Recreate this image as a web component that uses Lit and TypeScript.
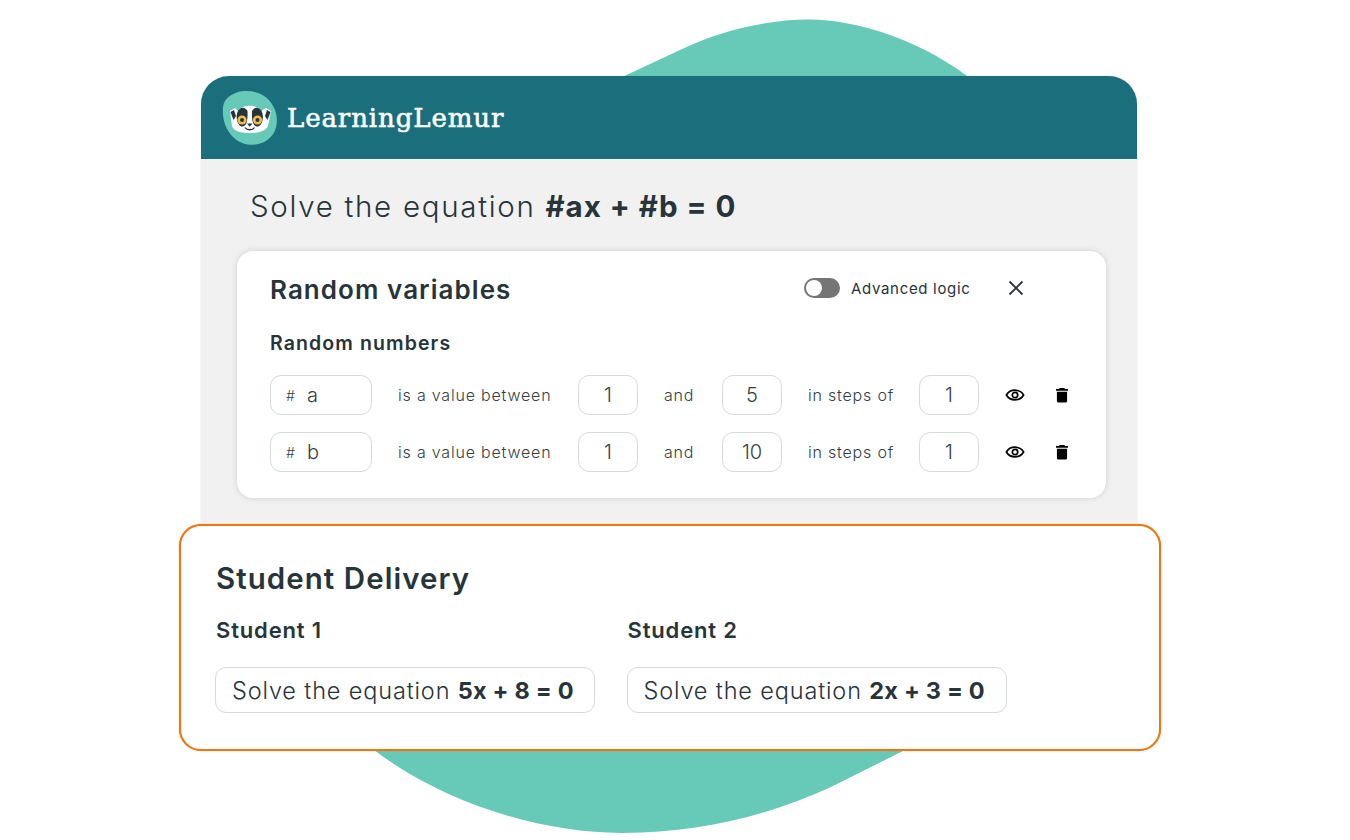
import { LitElement, html, css } from "lit";
import { customElement } from "lit/decorators.js";

const eye = html`<svg class="ic" width="20" height="20" viewBox="0 0 20 20" fill="none" stroke="#000" stroke-width="1.7"><path d="M1.4 10C3.2 6.9 6.3 5.2 10 5.2S16.8 6.9 18.6 10C16.8 13.1 13.7 14.8 10 14.8S3.2 13.1 1.4 10Z"/><circle cx="10" cy="10" r="2.7"/></svg>`;
const trash = html`<svg class="ic" width="20" height="20" viewBox="0 0 20 20" fill="#000"><path d="M7.7 3.1h4.6l.8.9h2.900v1.700H4V4h2.900zM4.900 6.700h10.200v9.200a1.700 1.700 0 0 1-1.700 1.700H6.600a1.700 1.700 0 0 1-1.700-1.700z"/></svg>`;
const logo = html`<svg width="56" height="56" viewBox="0 0 56 56">
  <path d="M22 1C35 0 48 6 53 20C57 31 55 44 44 51C33 57 20 56 11 47C3 39 0 28 1 17C2 8 11 2 22 1Z" fill="#67C9B8"/>
  <g transform="translate(-1 0)">
    <path d="M9 21L14 18L17 21C22 14 36 14 40 21L45 18L50 21L47 36C44 42 36 43 29 43C21 43 13 42 11 36Z" fill="#fff"/>
    <path d="M9.500 22L13 20L15 26L12.500 30ZM49.500 22L46 20L44 26L46.500 30Z" fill="#27343a"/>
    <path d="M26.500 21C23 15.500 18.500 17.500 16.500 22C14.500 27 16 35 20.500 36.500C25 37 27 32 26.500 21Z" fill="#27343a"/>
    <path d="M31 21C34.500 15.500 39 17.500 41 22C43 27 41.500 35 37 36.500C32.500 37 30.500 32 31 21Z" fill="#27343a"/>
    <circle cx="21" cy="30" r="4.600" fill="#EDBE4E"/><circle cx="21" cy="30" r="2" fill="#27343a"/>
    <circle cx="36.500" cy="30" r="4.600" fill="#EDBE4E"/><circle cx="36.500" cy="30" r="2" fill="#27343a"/>
    <path d="M26 33.500h5.500l-2.750 3.200z" fill="#27343a"/>
    <path d="M24 37.500C26 40.500 31.500 40.500 33.500 37.500" fill="none" stroke="#27343a" stroke-width="1.300"/>
  </g>
</svg>`;

@customElement("app-root")
export class AppRoot extends LitElement {
  static styles = css`
    :host { display: block; width: 1350px; height: 840px; background: #fff; overflow: hidden; position: relative;
      font-family: "Inter", "Open Sans", sans-serif; color: #27343a; }
    .blob { position: absolute; left: 0; top: 0; }
    .stack { position: relative; display: flex; flex-direction: column; padding: 76px 0 0 201px; }
    .card { width: 936px; height: 448px; box-sizing: border-box; background: #f1f1f1; border-radius: 28px 28px 0 0;
      box-shadow: 0 0 2px rgba(0,0,0,.13); display: flex; flex-direction: column; }
    .head { height: 83px; flex: none; background: #1b6f7c; border-radius: 28px 28px 0 0; display: flex; align-items: center; padding-left: 21px; gap: 9px; }
    .brand { font-family: "DejaVu Serif", serif; font-weight: 400; -webkit-text-stroke: .55px #fff; font-size: 26px; letter-spacing: .9px; color: #fff; }
    .title { font-size: 29.500px; font-weight: 300; letter-spacing: 1.700px; margin: 28px 0 0 49px; line-height: 38px; white-space: pre; }
    .title b { letter-spacing: 1px; }
    b { font-weight: 700; }
    .panel { margin: 26px 0 0 36px; width: 869px; height: 247px; box-sizing: border-box; background: #fff; border-radius: 16px;
      box-shadow: 0 0 6px rgba(0,0,0,.14); padding: 22px 33px 0; }
    .ph { display: flex; align-items: center; height: 34px; }
    .ph h2 { margin: -2px 0 0; font-size: 26px; font-weight: 600; width: 534px; letter-spacing: 1.050px; flex: none; }
    .sw { width: 36px; height: 20px; border-radius: 10px; background: #757575; position: relative; margin-right: 11px; flex: none; margin-top: -4px; }
    .sw::before { content: ""; position: absolute; left: 2px; top: 2px; width: 16px; height: 16px; border-radius: 50%; background: #fff; }
    .adv { font-size: 15px; font-weight: 400; width: 155px; letter-spacing: .68px; margin-top: -4px; flex: none; }
    .x { margin-top: -4px; flex: none; }
    .h3 { font-size: 19.500px; font-weight: 600; margin-top: 24px; line-height: 24px; letter-spacing: 1.100px; }
    .row { display: grid; grid-template-columns: 102px 206px 60px 84px 60px 137px 60px 1fr; align-items: center; height: 40px; font-size: 16px; font-weight: 300; color: #333f44; letter-spacing: .8px; }
    .row.one { margin-top: 20px; }
    .row.two { margin-top: 17px; }
    .row > .lab { padding-left: 26px; }
    .row > .and { text-align: center; padding-right: 2px; }
    .box { height: 40px; box-sizing: border-box; border: 1px solid #d5dbdd; border-radius: 11px; background: #fff; display: flex; align-items: center; font-size: 20px; font-weight: 300; letter-spacing: 0; }
    .num { justify-content: center; }
    .v { padding-left: 15px; gap: 12px; }
    .v small { font-size: 14px; }
    .acts { display: flex; gap: 27px; padding-left: 26px; }
    .ic { display: block; }
    .student { position: relative; width: 982px; height: 227px; box-sizing: border-box; margin-left: -22px; background: #fff; border: 2px solid #ee7613; border-radius: 22px; padding: 33px 0 0 35px; box-shadow: 0 0 1px #ee7613; }
    .student h2 { margin: 0; font-size: 29.500px; font-weight: 600; line-height: 38px; letter-spacing: 1.050px; }
    .cols { display: flex; margin-top: 18px; }
    .col { width: 411.500px; }
    .col .name { font-size: 22px; font-weight: 600; line-height: 30px; letter-spacing: .85px; }
    .eq { margin: 22px 0 0 -1px; width: 380px; height: 46px; box-sizing: border-box; border: 1px solid #d5dbdd; border-radius: 11px; display: flex; align-items: center; padding-left: 16px; font-size: 23.500px; font-weight: 300; letter-spacing: .85px; white-space: pre; }
    .eq b { letter-spacing: .2px; }
  `;
  render() {
    const rows = [["a", "5", "one"], ["b", "10", "two"]];
    return html`
      <svg class="blob" width="1350" height="840" viewBox="0 0 1350 840">
        <path d="M590 92L680 50C720 30 770 19.500 808 19.500C860 19.500 925 42 975 82L985 95ZM350 730C420 795 530 833 622 833C700 833 770 815 831 787L945 730Z" fill="#67C9B8"/>
      </svg>
      <div class="stack">
        <div class="card">
          <div class="head">${logo}<span class="brand">LearningLemur</span></div>
          <div class="title">Solve the equation <b>#ax + #b = 0</b></div>
          <div class="panel">
            <div class="ph">
              <h2>Random variables</h2>
              <span class="sw"></span><span class="adv">Advanced logic</span>
              <svg class="x" width="20" height="20" viewBox="0 0 20 20" stroke="#27343a" stroke-width="1.800"><path d="M3.500 3.500L16.500 16.500M16.500 3.500L3.500 16.500"/></svg>
            </div>
            <div class="h3">Random numbers</div>
            ${rows.map(([n, hi, c]) => html`
              <div class="row ${c}">
                <div class="box v"><small>#</small><span>${n}</span></div>
                <div class="lab">is a value between</div>
                <div class="box num">1</div>
                <div class="and">and</div>
                <div class="box num">${hi}</div>
                <div class="lab">in steps of</div>
                <div class="box num">1</div>
                <div class="acts">${eye}${trash}</div>
              </div>`)}
          </div>
        </div>
        <div class="student">
          <h2>Student Delivery</h2>
          <div class="cols">
            <div class="col"><div class="name">Student 1</div><div class="eq">Solve the equation <b>5x + 8 = 0</b></div></div>
            <div class="col"><div class="name">Student 2</div><div class="eq">Solve the equation <b>2x + 3 = 0</b></div></div>
          </div>
        </div>
      </div>`;
  }
}
